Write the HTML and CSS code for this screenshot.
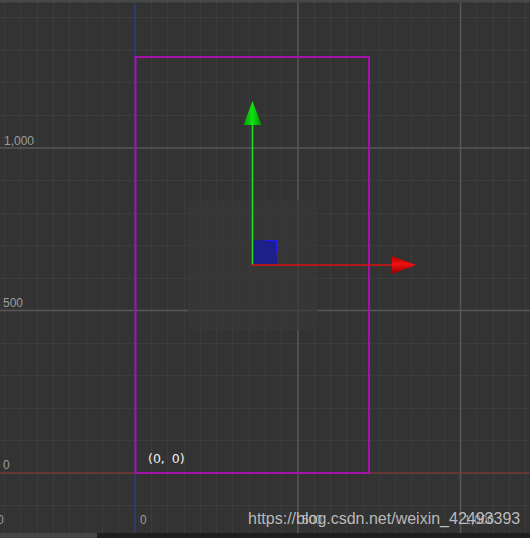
FILE: index.html
```html
<!DOCTYPE html>
<html>
<head>
<meta charset="utf-8">
<link rel="stylesheet" href="styles.css">
</head>
<body>
<div class="viewport">
<svg class="scene" width="530" height="538" viewBox="0 0 530 538" xmlns="http://www.w3.org/2000/svg">
  <defs>
    <linearGradient id="gGreen" x1="0" y1="0" x2="1" y2="0">
      <stop offset="0" stop-color="#00a000"/>
      <stop offset="0.5" stop-color="#10e010"/>
      <stop offset="1" stop-color="#009000"/>
    </linearGradient>
    <linearGradient id="gRed" x1="0" y1="0" x2="0" y2="1">
      <stop offset="0" stop-color="#b00000"/>
      <stop offset="0.45" stop-color="#f01010"/>
      <stop offset="1" stop-color="#900000"/>
    </linearGradient>
  </defs>
  <rect x="0" y="0" width="530" height="538" fill="#333333"/>
  <!-- minor vertical lines -->
  <g stroke="#3c3c3c" stroke-width="1">
    <line x1="4.5" y1="0" x2="4.5" y2="538"/>
    <line x1="20.5" y1="0" x2="20.5" y2="538"/>
    <line x1="37.5" y1="0" x2="37.5" y2="538"/>
    <line x1="53.5" y1="0" x2="53.5" y2="538"/>
    <line x1="69.5" y1="0" x2="69.5" y2="538"/>
    <line x1="86.5" y1="0" x2="86.5" y2="538"/>
    <line x1="102.5" y1="0" x2="102.5" y2="538"/>
    <line x1="118.5" y1="0" x2="118.5" y2="538"/>
    <line x1="151.5" y1="0" x2="151.5" y2="538"/>
    <line x1="167.5" y1="0" x2="167.5" y2="538"/>
    <line x1="184.5" y1="0" x2="184.5" y2="538"/>
    <line x1="200.5" y1="0" x2="200.5" y2="538"/>
    <line x1="216.5" y1="0" x2="216.5" y2="538"/>
    <line x1="232.5" y1="0" x2="232.5" y2="538"/>
    <line x1="249.5" y1="0" x2="249.5" y2="538"/>
    <line x1="265.5" y1="0" x2="265.5" y2="538"/>
    <line x1="281.5" y1="0" x2="281.5" y2="538"/>
    <line x1="314.5" y1="0" x2="314.5" y2="538"/>
    <line x1="330.5" y1="0" x2="330.5" y2="538"/>
    <line x1="346.5" y1="0" x2="346.5" y2="538"/>
    <line x1="363.5" y1="0" x2="363.5" y2="538"/>
    <line x1="379.5" y1="0" x2="379.5" y2="538"/>
    <line x1="395.5" y1="0" x2="395.5" y2="538"/>
    <line x1="411.5" y1="0" x2="411.5" y2="538"/>
    <line x1="428.5" y1="0" x2="428.5" y2="538"/>
    <line x1="444.5" y1="0" x2="444.5" y2="538"/>
    <line x1="476.5" y1="0" x2="476.5" y2="538"/>
    <line x1="493.5" y1="0" x2="493.5" y2="538"/>
    <line x1="509.5" y1="0" x2="509.5" y2="538"/>
    <line x1="525.5" y1="0" x2="525.5" y2="538"/>
  </g>
  <!-- minor horizontal lines -->
  <g stroke="#3c3c3c" stroke-width="1">
    <line x1="0" y1="17.5" x2="530" y2="17.5"/>
    <line x1="0" y1="50.5" x2="530" y2="50.5"/>
    <line x1="0" y1="82.5" x2="530" y2="82.5"/>
    <line x1="0" y1="115.5" x2="530" y2="115.5"/>
    <line x1="0" y1="180.5" x2="530" y2="180.5"/>
    <line x1="0" y1="213.5" x2="530" y2="213.5"/>
    <line x1="0" y1="245.5" x2="530" y2="245.5"/>
    <line x1="0" y1="278.5" x2="530" y2="278.5"/>
    <line x1="0" y1="343.5" x2="530" y2="343.5"/>
    <line x1="0" y1="375.5" x2="530" y2="375.5"/>
    <line x1="0" y1="408.5" x2="530" y2="408.5"/>
    <line x1="0" y1="440.5" x2="530" y2="440.5"/>
    <line x1="0" y1="505.5" x2="530" y2="505.5"/>
  </g>
  <!-- major lines -->
  <g stroke="#575757" stroke-width="1.5">
    <line x1="0" y1="148" x2="530" y2="148"/>
    <line x1="0" y1="310.5" x2="530" y2="310.5"/>
    <line x1="298" y1="0" x2="298" y2="538"/>
    <line x1="460.5" y1="0" x2="460.5" y2="538"/>
  </g>
  <!-- world axes -->
  <line x1="0" y1="473" x2="530" y2="473" stroke="#7a3a34" stroke-width="1.5"/>
  <line x1="135" y1="0" x2="135" y2="538" stroke="#2c3f80" stroke-width="1.5"/>
  <!-- node bounding panel -->
  <rect x="188" y="200" width="129" height="130" rx="8" fill="#373737" fill-opacity="0.7"/>
  <!-- design rect -->
  <rect x="135.5" y="57" width="233.5" height="416" fill="none" stroke="#a512a7" stroke-width="2"/>
  <!-- gizmo -->
  <rect x="253" y="240" width="24" height="24" fill="#1d2089"/>
  <polyline points="265,240.5 276.5,240.5 276.5,252" fill="none" stroke="#1a1aff" stroke-width="1.2"/>
  <line x1="252.5" y1="265" x2="252.5" y2="124" stroke="#22dd22" stroke-width="1.6"/>
  <polygon points="252.5,101 243.5,125 261.5,125" fill="url(#gGreen)"/>
  <line x1="252" y1="265" x2="393" y2="265" stroke="#dd1111" stroke-width="1.6"/>
  <polygon points="392,256 416,265 392,274" fill="url(#gRed)"/>
  <!-- labels -->
  <text class="ruler" x="4" y="145">1,000</text>
  <text class="ruler" x="3" y="307">500</text>
  <text class="ruler" x="3" y="469">0</text>
  <text class="ruler" x="-3" y="524">0</text>
  <text class="ruler" x="140" y="524">0</text>
  <text class="ruler" x="302" y="524">500</text>
  <text class="ruler" x="464" y="524">1,000</text>
  <text class="origin" x="148" y="463">(0, 0)</text>
  <text class="mark" x="248" y="524">https://blog.csdn.net/weixin_42493393</text>
  <!-- chrome strips -->
  <rect x="0" y="0" width="530" height="2.5" fill="#474747"/>
  <rect x="0" y="533" width="530" height="5" fill="#1f1f1f"/>
  <rect x="0" y="533" width="97" height="5" fill="#454545"/>
</svg>
</div>
</body>
</html>
```
FILE: styles.css
```css
html, body {
  margin: 0;
  padding: 0;
  background: #333333;
  overflow: hidden;
}
.viewport {
  width: 530px;
  height: 538px;
  overflow: hidden;
}
.scene {
  display: block;
}
.ruler {
  font-family: "Liberation Sans", Arial, sans-serif;
  font-size: 12px;
  fill: #9c9c9c;
}
.origin {
  font-family: "DejaVu Sans", sans-serif;
  font-size: 12.5px;
  fill: #f2f2f2;
  word-spacing: 3px;
}
.mark {
  font-family: "Liberation Sans", Arial, sans-serif;
  font-size: 16px;
  fill: #d4d4d4;
  fill-opacity: 0.85;
}
```
